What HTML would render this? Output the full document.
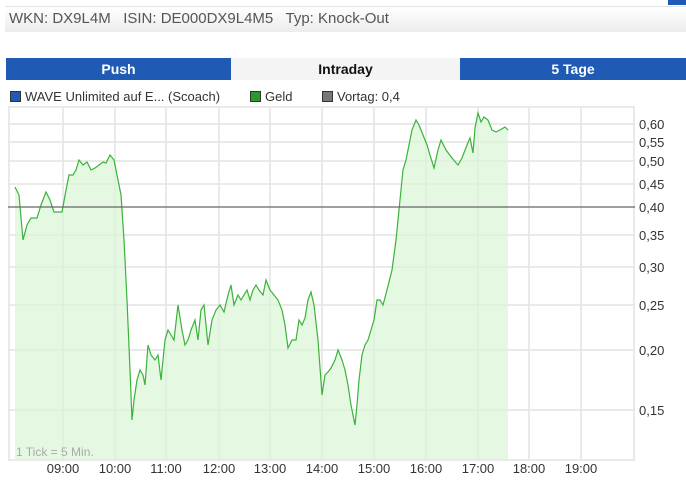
<!DOCTYPE html>
<html><head><meta charset="utf-8"><style>
body{margin:0;width:686px;height:491px;background:#fff;font-family:"Liberation Sans",Arial,sans-serif;position:relative;overflow:hidden}
.hdr{position:absolute;left:5px;top:6px;width:681px;height:26px;background:linear-gradient(#fff,#ececec);border-top:1px solid #e4e4e4;font-size:15px;color:#555;line-height:24px;padding-left:4px;box-sizing:border-box}
.corner{position:absolute;right:0;top:0;width:18px;height:5px;background:#1f5bb5}
.tab{position:absolute;top:58px;height:22px;line-height:22px;text-align:center;font-weight:bold;font-size:14px}
.leg{position:absolute;top:89px;font-size:13px;color:#333}
.sq{display:inline-block;width:9px;height:9px;border:1px solid #333;margin-right:4px;vertical-align:-1px}
</style></head><body>
<div class="corner"></div>
<div class="hdr">WKN: DX9L4M &nbsp; ISIN: DE000DX9L4M5 &nbsp; Typ: Knock-Out</div>
<div class="tab" style="left:6px;width:225px;background:#1f5bb5;color:#fff">Push</div>
<div class="tab" style="left:231px;width:229px;background:#f4f4f4;color:#111">Intraday</div>
<div class="tab" style="left:460px;width:226px;background:#1f5bb5;color:#fff">5 Tage</div>
<div class="leg" style="left:10px"><span class="sq" style="background:#1f5bb5"></span>WAVE Unlimited auf E... (Scoach)</div>
<div class="leg" style="left:250px"><span class="sq" style="background:#2a9a2a"></span>Geld</div>
<div class="leg" style="left:322px"><span class="sq" style="background:#777"></span>Vortag: 0,4</div>
<svg width="686" height="491" style="position:absolute;left:0;top:0" font-family="Liberation Sans,Arial,sans-serif" font-size="13" fill="#333">
<g stroke="#e4e4e4" stroke-width="1.5">
<line x1="8" y1="107" x2="635" y2="107"/><line x1="8" y1="460" x2="635" y2="460"/>
<line x1="9" y1="107" x2="9" y2="460"/><line x1="634" y1="107" x2="634" y2="460"/>
<line x1="63" y1="107" x2="63" y2="460"/><line x1="115" y1="107" x2="115" y2="460"/><line x1="166" y1="107" x2="166" y2="460"/><line x1="219" y1="107" x2="219" y2="460"/><line x1="270" y1="107" x2="270" y2="460"/><line x1="322" y1="107" x2="322" y2="460"/><line x1="374" y1="107" x2="374" y2="460"/><line x1="426" y1="107" x2="426" y2="460"/><line x1="478" y1="107" x2="478" y2="460"/><line x1="529" y1="107" x2="529" y2="460"/><line x1="581" y1="107" x2="581" y2="460"/>
<line x1="8" y1="124" x2="635" y2="124"/><line x1="8" y1="142" x2="635" y2="142"/><line x1="8" y1="161" x2="635" y2="161"/><line x1="8" y1="184" x2="635" y2="184"/><line x1="8" y1="235" x2="635" y2="235"/><line x1="8" y1="267" x2="635" y2="267"/><line x1="8" y1="305" x2="635" y2="305"/><line x1="8" y1="350" x2="635" y2="350"/><line x1="8" y1="410" x2="635" y2="410"/>
</g>
<polygon fill="#d8f5d6" fill-opacity="0.7" points="15,460 15,187 19,195 23,240 27,225 31,218 37,218 41,205 46,192 50,200 54,212 62,212 66,190 69,175 73,175 76,170 79,160 83,165 87,162 91,170 95,168 99,165 103,162 106,163 110,155 114,160 118,180 121,195 124,240 127,300 130,370 132,420 134,400 137,380 140,370 143,375 145,385 148,345 151,355 155,360 158,355 161,380 165,340 168,330 171,335 174,340 178,305 182,330 185,345 188,340 191,330 195,320 198,340 201,310 204,305 208,345 212,320 216,310 220,305 224,312 228,295 231,285 234,305 238,295 241,300 244,295 247,290 250,300 253,290 256,285 259,290 263,295 266,280 270,290 274,295 278,300 282,310 285,325 288,348 292,340 296,340 299,320 302,325 305,318 308,300 311,292 314,305 318,340 322,395 325,375 328,372 331,368 335,360 338,350 342,360 345,370 348,385 351,405 355,425 357,405 359,380 362,355 365,345 368,340 371,330 374,320 377,300 380,300 383,305 387,290 392,270 396,240 400,200 403,170 406,160 409,145 412,130 416,120 419,125 423,135 427,145 430,155 434,168 438,150 441,140 446,150 452,158 458,165 462,158 467,145 470,138 473,153 475,128 478,113 481,122 484,117 488,120 492,130 496,132 500,130 505,127 508,130 508,460"/>
<polyline fill="none" stroke="#3bb23b" stroke-width="1.2" points="15,187 19,195 23,240 27,225 31,218 37,218 41,205 46,192 50,200 54,212 62,212 66,190 69,175 73,175 76,170 79,160 83,165 87,162 91,170 95,168 99,165 103,162 106,163 110,155 114,160 118,180 121,195 124,240 127,300 130,370 132,420 134,400 137,380 140,370 143,375 145,385 148,345 151,355 155,360 158,355 161,380 165,340 168,330 171,335 174,340 178,305 182,330 185,345 188,340 191,330 195,320 198,340 201,310 204,305 208,345 212,320 216,310 220,305 224,312 228,295 231,285 234,305 238,295 241,300 244,295 247,290 250,300 253,290 256,285 259,290 263,295 266,280 270,290 274,295 278,300 282,310 285,325 288,348 292,340 296,340 299,320 302,325 305,318 308,300 311,292 314,305 318,340 322,395 325,375 328,372 331,368 335,360 338,350 342,360 345,370 348,385 351,405 355,425 357,405 359,380 362,355 365,345 368,340 371,330 374,320 377,300 380,300 383,305 387,290 392,270 396,240 400,200 403,170 406,160 409,145 412,130 416,120 419,125 423,135 427,145 430,155 434,168 438,150 441,140 446,150 452,158 458,165 462,158 467,145 470,138 473,153 475,128 478,113 481,122 484,117 488,120 492,130 496,132 500,130 505,127 508,130"/>
<line x1="8" y1="207" x2="635" y2="207" stroke="#666" stroke-width="1.2"/>
<g>
<text x="639" y="129">0,60</text><text x="639" y="147">0,55</text><text x="639" y="166">0,50</text><text x="639" y="189">0,45</text><text x="639" y="212">0,40</text><text x="639" y="240">0,35</text><text x="639" y="272">0,30</text><text x="639" y="310">0,25</text><text x="639" y="355">0,20</text><text x="639" y="415">0,15</text>
</g>
<g text-anchor="middle">
<text x="63" y="473">09:00</text><text x="115" y="473">10:00</text><text x="166" y="473">11:00</text><text x="219" y="473">12:00</text><text x="270" y="473">13:00</text><text x="322" y="473">14:00</text><text x="374" y="473">15:00</text><text x="426" y="473">16:00</text><text x="478" y="473">17:00</text><text x="529" y="473">18:00</text><text x="581" y="473">19:00</text>
</g>
<text x="16" y="456" font-size="12" fill="#aaa">1 Tick = 5 Min.</text>
</svg>
</body></html>
